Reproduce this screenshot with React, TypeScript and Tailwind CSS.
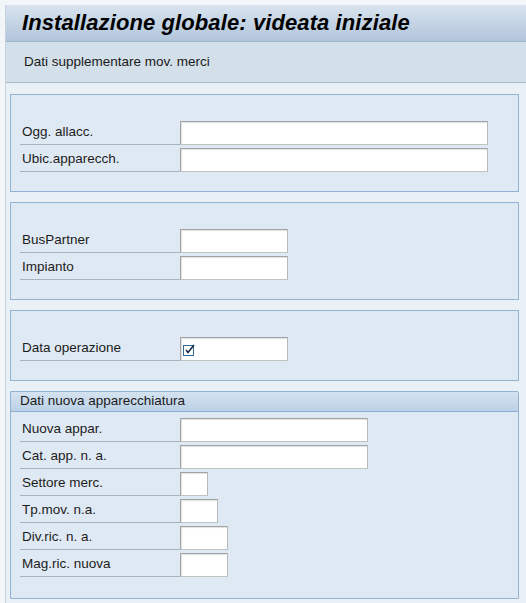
import React from "react";

const font = { fontFamily: '"Liberation Sans", Arial, sans-serif' };

function CheckIcon() {
  return (
    <svg width="13" height="13" viewBox="0 0 13 13">
      <rect x="0.5" y="2.5" width="10" height="10" fill="none" stroke="#2f6b99" strokeWidth="1" />
      <path d="M3 7 L5 9.5 L11 2" fill="none" stroke="#1b2a4a" strokeWidth="1.6" />
    </svg>
  );
}

function Row({ label, w, check }: { label: string; w: string; check?: boolean }) {
  return (
    <div className="flex items-stretch h-[24px]">
      <div className="w-[160px] border-b border-[#a7b2bd] flex items-center pl-[2px] text-[13.5px] text-[#1c1c1c]">
        {label}
      </div>
      <div
        className={`${w} h-[24px] bg-white border border-[#a3a3a3] border-r-[#b9b9b9] border-b-[#c2c2c2] shadow-[inset_1px_1px_1px_rgba(0,0,0,0.12)] flex items-center pl-[2px]`}
      >
        {check ? <CheckIcon /> : null}
      </div>
    </div>
  );
}

function Box({ children }: { children: React.ReactNode }) {
  return (
    <div className="ml-[4px] mr-[7px] border border-[#93b3d4] bg-[#dfe9f3] pt-[26px] pb-[19px] pl-[9px] flex flex-col gap-[3px]">
      {children}
    </div>
  );
}

export default function App() {
  return (
    <div className="w-[526px] h-[603px] bg-[#f3f6f9] pt-[5px] pl-[5px] flex flex-col overflow-hidden" style={font}>
      <div className="flex-1 flex flex-col border-l border-[#c5d2de] bg-[#e9f0f6]">
        <div className="h-[37px] bg-gradient-to-b from-[#d9e4ef] to-[#b1c5da] border-b border-[#9fb3c8] flex items-center pl-[16px]">
          <span className="text-[22px] font-bold italic text-black leading-none tracking-[0.1px]">
            Installazione globale: videata iniziale
          </span>
        </div>
        <div className="h-[41px] bg-[#d3dfe9] border-b border-[#a6b8ca] flex items-center pl-[18px] text-[13.5px] text-[#1a1a1a]">
          Dati supplementare mov. merci
        </div>
        <div className="flex flex-col gap-[10px] pt-[11px]">
          <Box>
            <Row label="Ogg. allacc." w="w-[308px]" />
            <Row label="Ubic.apparecch." w="w-[308px]" />
          </Box>
          <Box>
            <Row label="BusPartner" w="w-[108px]" />
            <Row label="Impianto" w="w-[108px]" />
          </Box>
          <Box>
            <Row label="Data operazione" w="w-[108px]" check />
          </Box>
          <div className="ml-[4px] mr-[7px] border border-[#93b3d4] bg-[#dfe9f3] rounded-tr-[2px]">
            <div className="h-[20px] bg-gradient-to-b from-[#d5e3f0] to-[#bcd1e6] border-b border-[#8fb0d2] flex items-center pl-[9px] text-[13.5px] text-[#1a1a1a]">
              Dati nuova apparecchiatura
            </div>
            <div className="pt-[6px] pb-[21px] pl-[9px] flex flex-col gap-[3px]">
              <Row label="Nuova appar." w="w-[188px]" />
              <Row label="Cat. app. n. a." w="w-[188px]" />
              <Row label="Settore merc." w="w-[28px]" />
              <Row label="Tp.mov. n.a." w="w-[38px]" />
              <Row label="Div.ric. n. a." w="w-[48px]" />
              <Row label="Mag.ric. nuova" w="w-[48px]" />
            </div>
          </div>
        </div>
      </div>
    </div>
  );
}
